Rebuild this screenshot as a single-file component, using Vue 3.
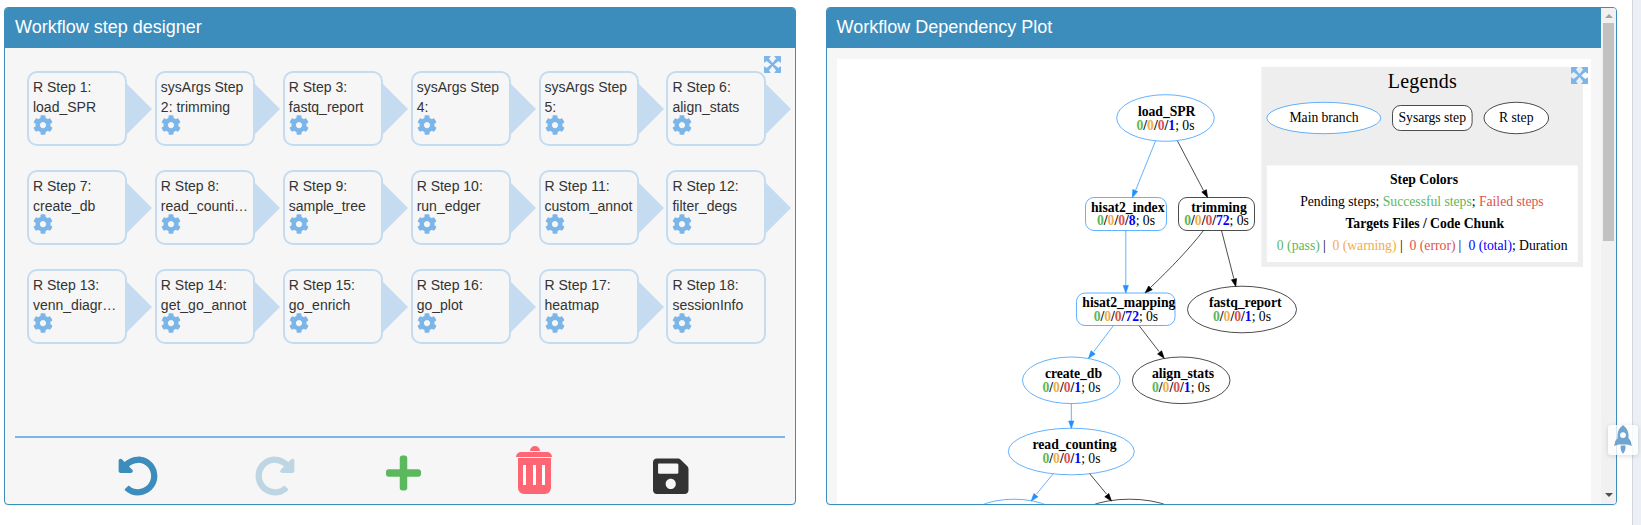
<script setup>
const steps = [
  ['R Step 1:', 'load_SPR'], ['sysArgs Step', '2: trimming'], ['R Step 3:', 'fastq_report'],
  ['sysArgs Step', '4:'], ['sysArgs Step', '5:'], ['R Step 6:', 'align_stats'],
  ['R Step 7:', 'create_db'], ['R Step 8:', 'read_counti…'], ['R Step 9:', 'sample_tree'],
  ['R Step 10:', 'run_edger'], ['R Step 11:', 'custom_annot'], ['R Step 12:', 'filter_degs'],
  ['R Step 13:', 'venn_diagr…'], ['R Step 14:', 'get_go_annot'], ['R Step 15:', 'go_enrich'],
  ['R Step 16:', 'go_plot'], ['R Step 17:', 'heatmap'], ['R Step 18:', 'sessionInfo']
]

const cog = 'M487.4 315.7l-42.6-24.6c4.3-23.2 4.3-47 0-70.2l42.6-24.6c4.9-2.8 7.1-8.6 5.5-14-11.1-35.6-30-67.8-54.7-94.6-3.8-4.1-10-5.1-14.8-2.3L380.8 110c-17.9-15.4-38.5-27.3-60.8-35.1V25.8c0-5.6-3.9-10.5-9.4-11.7-36.7-8.2-74.3-7.8-109.2 0-5.5 1.2-9.4 6.1-9.4 11.7V75c-22.2 7.9-42.8 19.8-60.8 35.1L88.7 85.5c-4.9-2.8-11-1.9-14.8 2.3-24.7 26.7-43.6 58.9-54.7 94.6-1.7 5.4.6 11.2 5.5 14L67.3 221c-4.3 23.2-4.3 47 0 70.2l-42.6 24.6c-4.9 2.8-7.1 8.6-5.5 14 11.1 35.6 30 67.8 54.7 94.6 3.8 4.1 10 5.1 14.8 2.3l42.6-24.6c17.9 15.4 38.5 27.3 60.8 35.1v49.2c0 5.6 3.9 10.5 9.4 11.7 36.7 8.2 74.3 7.8 109.2 0 5.5-1.2 9.4-6.1 9.4-11.7v-49.2c22.2-7.9 42.8-19.8 60.8-35.1l42.6 24.6c4.9 2.8 11 1.9 14.8-2.3 24.7-26.7 43.6-58.9 54.7-94.6 1.5-5.5-.7-11.3-5.6-14.1zM256 336c-44.1 0-80-35.9-80-80s35.9-80 80-80 80 35.9 80 80-35.9 80-80 80z'
const undo = 'M255.545 8c-66.269.119-126.438 26.233-170.86 68.685L48.971 40.971C33.851 25.851 8 36.559 8 57.941V192c0 13.255 10.745 24 24 24h134.059c21.382 0 32.09-25.851 16.971-40.971l-41.75-41.75c30.864-28.899 70.801-44.907 113.23-45.273 92.398-.798 170.283 73.977 169.484 169.442C423.236 348.009 349.816 424 256 424c-41.127 0-79.997-14.678-110.63-41.556-4.743-4.161-11.906-3.908-16.368.553L89.34 422.659c-4.872 4.872-4.631 12.815.482 17.433C133.798 479.813 192.074 504 256 504c136.966 0 247.999-111.033 248-247.998C504.001 119.193 392.354 7.755 255.545 8z'
const plus = 'M416 208H272V64c0-17.67-14.33-32-32-32h-32c-17.67 0-32 14.33-32 32v144H32c-17.67 0-32 14.33-32 32v32c0 17.67 14.33 32 32 32h144v144c0 17.67 14.33 32 32 32h32c17.67 0 32-14.33 32-32V304h144c17.67 0 32-14.33 32-32v-32c0-17.67-14.33-32-32-32z'
const save = 'M433.941 129.941l-83.882-83.882A48 48 0 0 0 316.118 32H48C21.49 32 0 53.49 0 80v352c0 26.51 21.49 48 48 48h352c26.51 0 48-21.49 48-48V163.882a48 48 0 0 0-14.059-33.941zM224 416c-35.346 0-64-28.654-64-64 0-35.346 28.654-64 64-64s64 28.654 64 64c0 35.346-28.654 64-64 64zm96-304.52V212c0 6.627-5.373 12-12 12H76c-6.627 0-12-5.373-12-12V108c0-6.627 5.373-12 12-12h228.52c3.183 0 6.235 1.264 8.485 3.515l3.48 3.48A11.996 11.996 0 0 1 320 111.48z'
const expand = 'M.5 0H6.300Q6.800.300 6.500.800L4.900 2.500 8.500 7 12.100 2.500 10.500.800Q10.200.300 10.700 0H16.500L17 .500V6.300Q16.700 6.800 16.200 6.500L14.500 4.900 10 8.500 14.500 12.100 16.200 10.500Q16.700 10.200 17 10.700V16.500L16.500 17H10.700Q10.200 16.700 10.500 16.200L12.100 14.500 8.500 10 4.900 14.500 6.500 16.200Q6.800 16.700 6.300 17H.500L0 16.500V10.700Q.300 10.200.800 10.500L2.500 12.100 7 8.500 2.500 4.900.800 6.500Q.300 6.800 0 6.300V.500z'

// Graph coordinates; the viewBox starts at (837, 59).
// tx/w: name position and width, sx/sw: counter position and width.
const nodes = [
  { name: 'load_SPR', n: '1', main: true, cx: 1165.5, cy: 118, rx: 48.8, ry: 23.3, tx: 1138, w: 57.5, y: 116, sx: 1136.5, sw: 58, sy: 130 },
  { name: 'hisat2_index', n: '8', main: true, box: [1085.5, 197.5, 81, 33], tx: 1091, w: 73.5, y: 212, sx: 1097, sw: 58, sy: 224.7 },
  { name: 'trimming', n: '72', box: [1178.5, 197.5, 76, 33], tx: 1191.3, w: 55.5, y: 212, sx: 1184.3, sw: 64.5, sy: 224.7 },
  { name: 'hisat2_mapping', n: '72', main: true, box: [1076.5, 293, 98.5, 32.5], tx: 1082.3, w: 93, y: 307, sx: 1093.7, sw: 64.5, sy: 321 },
  { name: 'fastq_report', n: '1', cx: 1242, cy: 309.5, rx: 54.5, ry: 23.3, tx: 1209, w: 72.5, y: 307, sx: 1213, sw: 58, sy: 321 },
  { name: 'create_db', n: '1', main: true, cx: 1071.3, cy: 380.3, rx: 48.8, ry: 23.3, tx: 1045, w: 57, y: 378, sx: 1042.5, sw: 58, sy: 392 },
  { name: 'align_stats', n: '1', cx: 1181.2, cy: 380.3, rx: 48.8, ry: 23.3, tx: 1152, w: 62, y: 378, sx: 1152, sw: 58, sy: 392 },
  { name: 'read_counting', n: '1', main: true, cx: 1071.3, cy: 451.5, rx: 63, ry: 23.3, tx: 1032.5, w: 84, y: 449, sx: 1042.5, sw: 58, sy: 463 },
  { cx: 1014, cy: 522.5, rx: 49, ry: 23.3, main: true },
  { cx: 1129.5, cy: 522.5, rx: 56, ry: 23.3 }
]
const edges = [
  { main: true, d: 'M1155.5 141L1135.500 190.5', t: [1132.4, 197.5, -68] },
  { d: 'M1177.500 141L1203.500 190.5', t: [1207.600, 197.5, -118] },
  { main: true, d: 'M1125.800 230.5V285.5', t: [1125.800, 293, -90] },
  { d: 'M1203.500 230.5C1190 248 1171 268 1150.500 287.5', t: [1145, 293, -43] },
  { d: 'M1221.500 230.5L1233.800 278.5', t: [1235.800, 286.500, -104] },
  { main: true, d: 'M1113.500 325.500L1093.800 351.5', t: [1088.500, 358.300, -52] },
  { d: 'M1139 325.500L1159 351.5', t: [1164.200, 358.300, -128] },
  { main: true, d: 'M1071.300 403.500V421', t: [1071.300, 428.500, -90] },
  { main: true, d: 'M1053 474L1036.500 494', t: [1031.200, 501, -51] },
  { d: 'M1089.500 473.500L1106.500 494', t: [1111.500, 501, -129] }
]
</script>

<template>
  <div class="page">
    <section class="panel designer">
      <h3 class="head">Workflow step designer</h3>
      <div class="body">
        <svg class="expand" viewBox="0 0 17 17"><path :d="expand" /></svg>
        <div class="grid">
          <div v-for="(s, i) in steps" :key="i" class="step" :class="{ last: i === steps.length - 1 }">
            <div class="label">{{ s[0] }}</div>
            <div class="label">{{ s[1] }}</div>
            <svg class="cog" viewBox="0 0 512 512"><path :d="cog" /></svg>
          </div>
        </div>
        <div class="tools">
          <svg class="undo" viewBox="0 0 512 512"><path :d="undo" /></svg>
          <svg class="redo" viewBox="0 0 512 512"><path :d="undo" transform="matrix(-1 0 0 1 512 0)" /></svg>
          <svg class="plus" viewBox="0 0 448 512"><path :d="plus" /></svg>
          <svg class="trash" viewBox="0 0 36 48">
            <path d="M14 5a5 5 0 0 1 10 0zM0 11a5 5 0 0 1 5-5h26a5 5 0 0 1 5 5zM2 12h33v30a6 6 0 0 1-6 6H8a6 6 0 0 1-6-6z" />
            <path class="slit" d="M7 19h3v20H7zM17 19h3v20h-3zM26 19h3v20h-3z" />
          </svg>
          <svg class="save" viewBox="0 0 448 512"><path :d="save" /></svg>
        </div>
      </div>
    </section>

    <section class="panel plot">
      <div class="view">
        <h3 class="head">Workflow Dependency Plot</h3>
        <div class="body">
          <svg class="expand" viewBox="0 0 17 17"><path :d="expand" /></svg>
          <svg class="graph" viewBox="837 59 754 445">
            <g v-for="(e, i) in edges" :key="'e' + i" :class="{ main: e.main }">
              <path class="line" :d="e.d" />
              <path class="tip" d="M0 0L7.500 -2.600V2.600z" :transform="`translate(${e.t[0]} ${e.t[1]}) rotate(${e.t[2]})`" />
            </g>
            <g v-for="(n, i) in nodes" :key="'n' + i" :class="{ main: n.main }">
              <rect v-if="n.box" class="line" :x="n.box[0]" :y="n.box[1]" :width="n.box[2]" :height="n.box[3]" rx="8.500" />
              <ellipse v-else class="line" :cx="n.cx" :cy="n.cy" :rx="n.rx" :ry="n.ry" />
              <template v-if="n.name">
                <text class="b" :x="n.tx" :y="n.y" :textLength="n.w">{{ n.name }}</text>
                <text class="b" :x="n.sx" :y="n.sy" :textLength="n.sw"><tspan class="ok">0</tspan>/<tspan class="warn">0</tspan>/<tspan class="err">0</tspan>/<tspan class="tot">{{ n.n }}</tspan><tspan class="n">; 0s</tspan></text>
              </template>
            </g>

            <rect class="lg" x="1261.300" y="67" width="321.700" height="200" />
            <rect class="w" x="1266.800" y="165.500" width="311" height="96.500" />
            <text class="title" x="1387.800" y="88" textLength="69">Legends</text>
            <ellipse class="line w blue" cx="1323.800" cy="118" rx="57" ry="15.700" />
            <rect class="line w" x="1392.500" y="105.500" width="79.600" height="25" rx="8" />
            <ellipse class="line w" cx="1516.300" cy="118" rx="32.300" ry="15.700" />
            <text x="1289.500" y="122" textLength="69">Main branch</text>
            <text x="1398.500" y="122" textLength="67.500">Sysargs step</text>
            <text x="1499" y="122" textLength="34.500">R step</text>
            <text class="b" x="1390" y="184" textLength="68">Step Colors</text>
            <text x="1300.200" y="206" textLength="243.500">Pending steps; <tspan class="ok">Successful steps</tspan>; <tspan class="err">Failed steps</tspan></text>
            <text class="b" x="1345.500" y="228" textLength="158.500">Targets Files / Code Chunk</text>
            <text class="ok" x="1276.800" y="250" textLength="43">0 (pass)</text>
            <text x="1323" y="250">|</text>
            <text class="warn" x="1332.500" y="250" textLength="64">0 (warning)</text>
            <text x="1400" y="250">|</text>
            <text class="err" x="1409.500" y="250" textLength="46">0 (error)</text>
            <text x="1458.600" y="250">|</text>
            <text x="1468.500" y="250" textLength="99"><tspan class="tot">0 (total)</tspan>; Duration</text>
          </svg>
        </div>
      </div>
      <div class="scroll">
        <i class="up"></i><i class="thumb"></i><i class="down"></i>
      </div>
    </section>

    <aside class="side"></aside>
    <div class="rocket">
      <svg viewBox="0 0 18 29">
        <path fill-rule="evenodd" d="M9 0C12.500 2.700 14.500 6 14.500 10v3l2.200 3 1.200 5-4.400-1.500H4.500L.1 21l1.200-5L3.500 13v-3C3.500 6 5.500 2.700 9 0zM9 7.200a2.900 2.900 0 1 0 0 5.800 2.900 2.900 0 0 0 0-5.800zM6.800 20.500h4.600C12 24 11 26.500 9 28.800 7 26.500 6.200 24 6.800 20.500z" />
      </svg>
    </div>
  </div>
</template>

<style>
body { margin: 0; background: #fff; overflow: hidden; }
</style>

<style scoped>
* { box-sizing: border-box; }
.page { position: relative; display: flex; width: 1641px; height: 525px; padding: 7px 0 0 4px; font-family: "Liberation Sans", Arial, sans-serif; overflow: hidden; }
.panel { height: 498px; border: 1px solid #3c8dbc; border-radius: 4px; background: #f6f6f6; overflow: hidden; box-shadow: 0 1px 1px rgba(0, 0, 0, .05); }
.designer { width: 792px; margin-right: 30px; }
.plot { width: 791px; display: flex; }
.view { width: 774px; height: 496px; overflow: hidden; }
.head { margin: 0; height: 40px; padding: 0 10px; background: #3c8dbc; color: #fff; font-size: 18px; font-weight: 400; line-height: 38px; }
.plot .head { padding-left: 9.500px; }
.body { position: relative; height: 456px; }
.expand { position: absolute; top: 8px; right: 14px; width: 17px; height: 17px; fill: #7cb5e8; z-index: 1; }
.plot .expand { right: 13px; }
.grid { display: grid; grid-template-columns: repeat(6, 100px); column-gap: 27.900px; row-gap: 24px; padding: 23px 0 0 21.970px; }
.step { position: relative; height: 75px; border: 2px solid #c5dbf0; border-radius: 10px; padding: 4px 0 0 4px; font-size: 14px; line-height: 20px; color: #333; }
.step::after { content: ""; position: absolute; left: 98px; top: 11px; border: 25px solid transparent; border-left-color: #c5dbf0; border-right: 0; }
.step.last::after { display: none; }
.label { width: 90px; white-space: nowrap; }
.cog { display: block; width: 20px; height: 20px; margin-top: -2px; fill: #7cb5e8; }
.tools { display: flex; height: 69px; margin: 92px 10px 0; border-top: 2px solid #7cb5ec; padding-left: 103px; }
.undo { width: 40px; height: 40px; margin-top: 18px; fill: #3c8dbc; }
.redo { width: 40px; height: 40px; margin: 18px 0 0 97px; fill: #bed6e3; }
.plus { width: 35px; height: 40px; margin: 15px 0 0 91px; fill: #5cb85c; }
.trash { width: 36px; height: 48px; margin: 8px 0 0 95px; fill: #ff6673; }
.save { width: 35.500px; height: 40.600px; margin: 18px 0 0 101px; fill: #333; }
.slit { fill: #fff; }
.graph { display: block; width: 754px; height: 445px; margin: 11px 0 0 10px; background: #fff; font-family: "Liberation Serif", "Times New Roman", serif; font-size: 13.700px; }
.line { fill: none; stroke: #000; stroke-width: .7; }
.main .line, .line.blue { stroke: #1e90ff; }
.line.w { fill: #fff; }
.tip { fill: #000; stroke: #000; stroke-width: .6; }
.main .tip { fill: #1e90ff; stroke: #1e90ff; }
.w { fill: #fff; }
.lg { fill: #eee; }
.b { font-weight: 700; }
.n { font-weight: 400; }
.title { font-size: 20px; }
.ok { fill: #5cb85c; }
.warn { fill: #f0ad4e; }
.err { fill: #d9534f; }
.tot { fill: #00f; }
.scroll { display: flex; flex-direction: column; align-items: center; width: 15px; height: 496px; background: #f1f1f1; }
.up { margin-top: 6px; border: 4px solid transparent; border-top: 0; border-bottom-color: #a3a3a3; }
.thumb { width: 11px; height: 218px; margin-top: 5px; background: #c1c1c1; }
.down { margin: auto 0 7px; border: 4px solid transparent; border-bottom: 0; border-top-color: #505050; }
.side { width: 9px; height: 525px; margin: -7px 0 0 15px; background: #ecf0f5; border-left: 1px solid #d2d6de; }
.rocket { position: absolute; left: 1608px; top: 425px; width: 30px; height: 30px; background: rgba(255, 255, 255, .8); border-radius: 3px; box-shadow: 0 1px 5px rgba(0, 0, 0, .15); }
.rocket svg { display: block; width: 18px; height: 29px; margin: 0 0 0 6px; fill: #71a4cf; }
</style>
